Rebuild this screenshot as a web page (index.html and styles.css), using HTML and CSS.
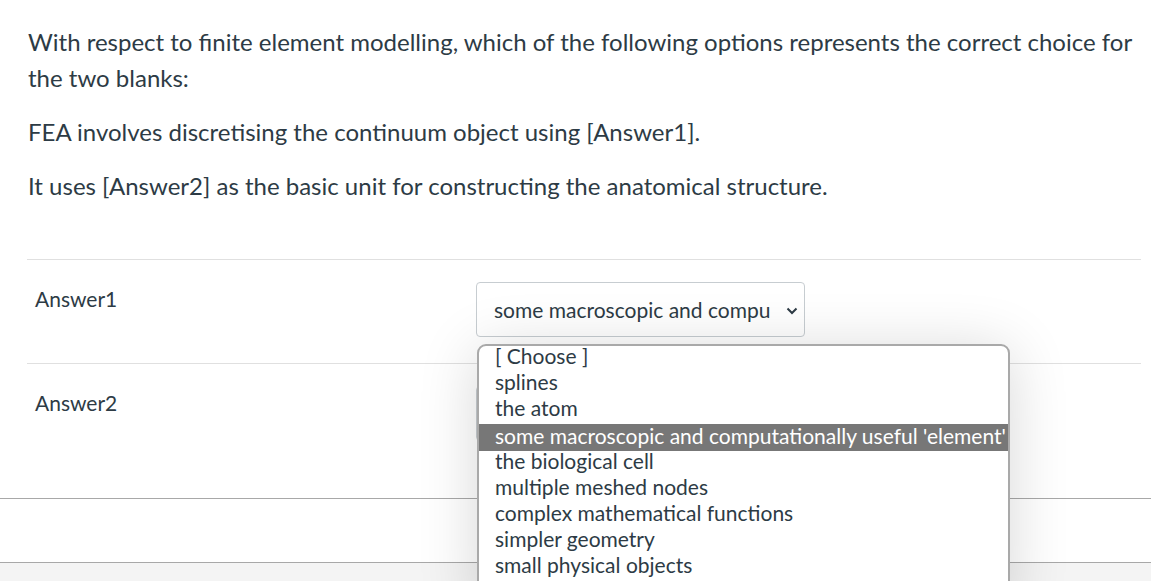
FILE: index.html
```html
<!DOCTYPE html>
<html>
<head>
<meta charset="utf-8">
<link rel="stylesheet" href="styles.css">
</head>
<body>
<div class="question">
  <div class="qtext">
    <p>With respect to finite element modelling, which of the following options represents the correct choice for the two blanks:</p>
    <p>FEA involves discretising the continuum object using [Answer1].</p>
    <p>It uses [Answer2] as the basic unit for constructing the anatomical structure.</p>
  </div>
  <div class="answers">
    <div class="row">
      <div class="label">Answer1</div>
      <div class="select">
        <span class="sel-text">some macroscopic and compu</span>
        <svg class="chev" width="12" height="8" viewBox="0 0 12 8"><path d="M1.5 1.5 L6 6 L10.5 1.5" fill="none" stroke="#2d3b45" stroke-width="2"/></svg>
      </div>
    </div>
    <div class="row">
      <div class="label">Answer2</div>
      <div class="select">
        <span class="sel-text">some macroscopic and compu</span>
        <svg class="chev" width="12" height="8" viewBox="0 0 12 8"><path d="M1.5 1.5 L6 6 L10.5 1.5" fill="none" stroke="#2d3b45" stroke-width="2"/></svg>
      </div>
    </div>
  </div>
</div>
<div class="footer">
  <div class="footer-band"></div>
  <div class="footer-bottom"></div>
</div>
<ul class="popup">
  <li>[ Choose ]</li>
  <li>splines</li>
  <li>the atom</li>
  <li class="active">some macroscopic and computationally useful 'element'</li>
  <li>the biological cell</li>
  <li>multiple meshed nodes</li>
  <li>complex mathematical functions</li>
  <li>simpler geometry</li>
  <li>small physical objects</li>
</ul>
</body>
</html>
```
FILE: styles.css
```css
html, body {
  margin: 0;
  padding: 0;
  background: #ffffff;
}
body {
  font-family: Lato, "Open Sans", sans-serif;
  color: #2d3b45;
  overflow: hidden;
  height: 581px;
}
.question {
  padding: 6px 10px 0 28px;
}
.qtext {
  font-size: 24px;
  line-height: 36px;
  padding-bottom: 37px;
}
.qtext p {
  margin: 18px 0;
}
.answers {
  margin-left: -1px;
}
.row {
  display: flex;
  border-top: 1px solid #e0e0e0;
  padding: 22px 0 26px 0;
}
.row:last-child {
  padding-bottom: 57px;
}
.label {
  width: 441px;
  padding-left: 8px;
  font-size: 21px;
  line-height: 32px;
  padding-top: 1px;
}
.select {
  height: 53px;
  border: 1px solid #c7cdd1;
  border-radius: 4px;
  display: flex;
  align-items: center;
  justify-content: space-between;
  padding: 0 6px 0 17px;
  box-sizing: content-box;
  font-size: 21px;
  width: 304px;
}
.chev {
  display: block;
  margin-top: 2px;
}
.footer-band {
  border-top: 1px solid #a8a8a8;
  height: 63px;
}
.footer-bottom {
  border-top: 1px solid #a8a8a8;
  background: #f4f4f4;
  height: 30px;
}
.popup {
  position: absolute;
  left: 477px;
  top: 344px;
  width: 529px;
  margin: 0;
  padding: 0;
  list-style: none;
  background: #ffffff;
  border: 2px solid #a9a9a9;
  border-radius: 9px;
  box-shadow: 0 6px 60px rgba(0, 0, 0, 0.16);
  font-size: 21px;
  color: #2d3b45;
  height: 260px;
  overflow: hidden;
}
.popup li {
  padding-left: 16px;
  height: 26px;
  line-height: 19px;
  white-space: nowrap;
}
.popup li.active {
  background: #777777;
  color: #ffffff;
  height: 27px;
  line-height: 24px;
}
```
